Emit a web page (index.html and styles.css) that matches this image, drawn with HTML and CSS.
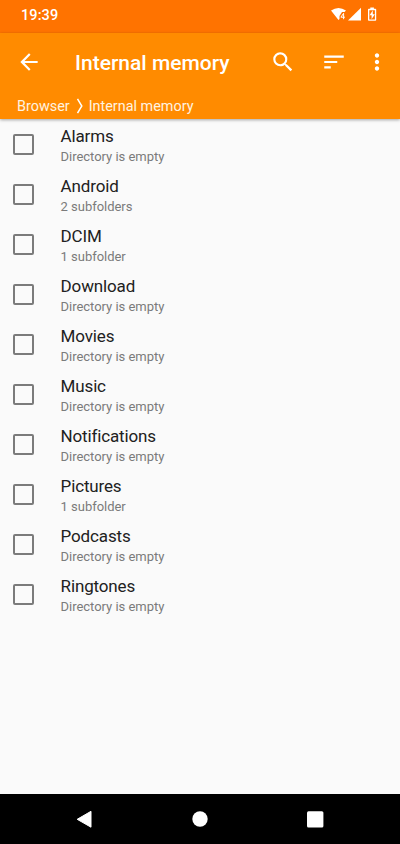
FILE: index.html
```
<!DOCTYPE html>
<html lang="en">
<head>
<meta charset="utf-8">
<title>Internal memory</title>
<link rel="stylesheet" href="styles.css">
</head>
<body>
<div class="status">
  <span class="clock">19:39</span>
  <svg class="status-icons" width="48" height="16" viewBox="0 0 48 16">
    <path fill="#fff" d="M1 3.400Q8.500-1.600 16 3.400L14.500 5H12L9.500 9V12L8.500 13Z"/>
    <path fill="none" stroke="#fff" stroke-width="1" d="M13.600 12.200V6.300L10.900 10.200H14.900"/>
    <path fill="#fff" d="M18 13.600L31 .7V13.600Z"/>
    <path fill="#fff" fill-rule="evenodd" d="M40.300 .5h3.600v1.300h1.500q.8 0 .8.800v10.300q0 .8-.8.800h-6.600q-.8 0-.8-.8V2.600q0-.8.8-.8h1.500zM39.300 3.200v9.200h5.600V3.200z"/>
    <path fill="#fff" d="M42.800 3.300L39.600 8.300h2v3.900l3.200-5h-2z"/>
  </svg>
</div>
<header class="appbar">
  <div class="toolbar">
    <svg class="back" width="26" height="26" viewBox="0 0 24 24"><path fill="#fff" d="M20 11H7.830l5.590-5.590L12 4l-8 8 8 8 1.410-1.410L7.830 13H20v-2z"/></svg>
    <h1 class="title">Internal memory</h1>
    <svg class="search" width="26" height="26" viewBox="0 0 24 24"><path fill="#fff" d="M15.500 14h-.79l-.28-.27A6.471 6.471 0 0 0 16 9.500 6.500 6.500 0 1 0 9.500 16c1.610 0 3.090-.59 4.230-1.570l.27.28v.79l5 4.990L20.490 19l-4.990-5zm-6 0C7.010 14 5 11.990 5 9.500S7.010 5 9.500 5 14 7.010 14 9.500 11.990 14 9.500 14z"/></svg>
    <svg class="sort" width="26" height="26" viewBox="0 0 24 24"><path fill="#fff" d="M3 18h6v-2H3v2zM3 6v2h18V6H3zm0 7h12v-2H3v2z"/></svg>
    <svg class="more" width="26" height="26" viewBox="0 0 24 24"><path fill="#fff" d="M12 8c1.100 0 2-.9 2-2s-.9-2-2-2-2 .9-2 2 .9 2 2 2zm0 2c-1.100 0-2 .9-2 2s.9 2 2 2 2-.9 2-2-.9-2-2-2zm0 6c-1.100 0-2 .9-2 2s.9 2 2 2 2-.9 2-2-.9-2-2-2z"/></svg>
  </div>
  <nav class="crumbs">
    <span class="crumb-root">Browser</span>
    <svg class="chevron" width="8" height="18" viewBox="0 0 8 18"><path fill="none" stroke="#fff" stroke-width="1.500" d="M1.500 1.800L5.800 9L1.500 16.200"/></svg>
    <span class="crumb-here">Internal memory</span>
  </nav>
</header>
<main class="list">
  <div class="row"><span class="box"></span><div><div class="name">Alarms</div><div class="info">Directory is empty</div></div></div>
  <div class="row"><span class="box"></span><div><div class="name">Android</div><div class="info">2 subfolders</div></div></div>
  <div class="row"><span class="box"></span><div><div class="name">DCIM</div><div class="info">1 subfolder</div></div></div>
  <div class="row"><span class="box"></span><div><div class="name">Download</div><div class="info">Directory is empty</div></div></div>
  <div class="row"><span class="box"></span><div><div class="name">Movies</div><div class="info">Directory is empty</div></div></div>
  <div class="row"><span class="box"></span><div><div class="name">Music</div><div class="info">Directory is empty</div></div></div>
  <div class="row"><span class="box"></span><div><div class="name">Notifications</div><div class="info">Directory is empty</div></div></div>
  <div class="row"><span class="box"></span><div><div class="name">Pictures</div><div class="info">1 subfolder</div></div></div>
  <div class="row"><span class="box"></span><div><div class="name">Podcasts</div><div class="info">Directory is empty</div></div></div>
  <div class="row"><span class="box"></span><div><div class="name">Ringtones</div><div class="info">Directory is empty</div></div></div>
</main>
<footer class="navbar">
  <svg width="18" height="18" viewBox="0 0 18 18"><path fill="#fff" stroke="#fff" stroke-linejoin="round" d="M2.200 9.300L16 1.300V17.200Z"/></svg>
  <svg width="18" height="18" viewBox="0 0 18 18"><circle fill="#fff" cx="9" cy="9" r="7.700"/></svg>
  <svg width="18" height="18" viewBox="0 0 18 18"><rect fill="#fff" x="1" y="1.200" width="16.400" height="16.400" rx="1.500"/></svg>
</footer>
</body>
</html>
```
FILE: styles.css
```
* { box-sizing: border-box; }
body {
  margin: 0;
  height: 844px;
  display: flex;
  flex-direction: column;
  overflow: hidden;
  background: #fafafa;
  font-family: Roboto, sans-serif;
}
svg { display: block; flex: none; }
.status {
  flex: none;
  height: 33px;
  padding: 7px 22px 0 21px;
  display: flex;
  justify-content: space-between;
  background: #ff7300;
  color: #fff;
}
.clock { font-size: 14.500px; line-height: 18px; font-weight: 500; letter-spacing: 0.100px; }
.appbar {
  flex: none;
  height: 86px;
  background: #ff8b00;
  color: #fff;
  box-shadow: 0 1px 3px rgba(0, 0, 0, 0.35);
}
.toolbar { height: 58px; display: flex; align-items: center; padding-left: 16px; }
.title {
  margin: 2px 0 0 33px;
  width: 194.500px;
  font-size: 21px;
  line-height: 28px;
  font-weight: 500;
  white-space: nowrap;
}
.sort { margin-left: 25.500px; }
.more { margin-left: 17px; }
.crumbs {
  display: flex;
  align-items: center;
  height: 29px;
  padding-left: 17px;
  font-size: 14.400px;
  color: #fff3e0;
}
.crumbs span { padding-top: 1px; }
.chevron { margin: 0 5px 0 6px; }
.list { flex: 1; }
.row { height: 50px; display: flex; }
.box {
  flex: none;
  width: 21px;
  height: 21px;
  margin: 15px 27px 0 12.600px;
  border: 2px solid #7b7b7b;
  border-radius: 2px;
}
.name { margin-top: 6px; font-size: 17px; line-height: 22px; letter-spacing: -0.150px; color: #212121; }
.info { font-size: 13px; line-height: 20px; letter-spacing: -0.030px; color: #7b7b7b; }
.navbar {
  flex: none;
  height: 50px;
  display: flex;
  justify-content: space-between;
  padding: 16px 76px 0 75px;
  background: #000;
}
```
